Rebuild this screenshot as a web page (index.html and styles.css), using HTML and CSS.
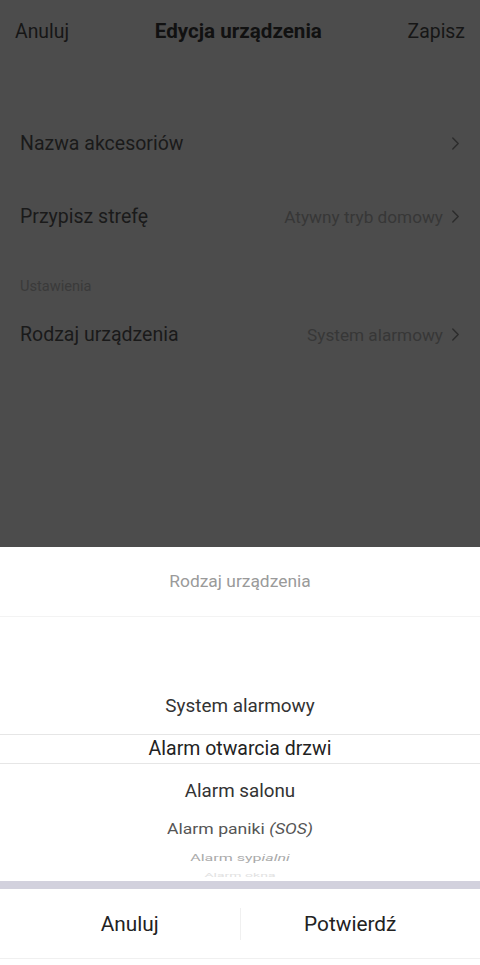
FILE: index.html
```html
<!DOCTYPE html>
<html lang="pl">
<head>
<meta charset="utf-8">
<title>Edycja urządzenia</title>
<link rel="stylesheet" href="styles.css">
</head>
<body>
<div class="screen">
  <main class="page">
    <header class="topbar">
      <span class="topbar-btn">Anuluj</span>
      <span class="topbar-title">Edycja urządzenia</span>
      <span class="topbar-btn">Zapisz</span>
    </header>
    <div class="list">
      <div class="row">
        <span class="row-label">Nazwa akcesoriów</span>
        <span class="row-value"><svg class="chev" viewBox="0 0 10 16" width="9" height="15"><path d="M2 2l6 6-6 6" fill="none" stroke="currentColor" stroke-width="1.6" stroke-linecap="round" stroke-linejoin="round"/></svg></span>
      </div>
      <div class="row">
        <span class="row-label">Przypisz strefę</span>
        <span class="row-value">Atywny tryb domowy<svg class="chev" viewBox="0 0 10 16" width="9" height="15"><path d="M2 2l6 6-6 6" fill="none" stroke="currentColor" stroke-width="1.6" stroke-linecap="round" stroke-linejoin="round"/></svg></span>
      </div>
      <div class="section-label">Ustawienia</div>
      <div class="row">
        <span class="row-label">Rodzaj urządzenia</span>
        <span class="row-value">System alarmowy<svg class="chev" viewBox="0 0 10 16" width="9" height="15"><path d="M2 2l6 6-6 6" fill="none" stroke="currentColor" stroke-width="1.6" stroke-linecap="round" stroke-linejoin="round"/></svg></span>
      </div>
    </div>
  </main>
  <section class="sheet">
    <div class="sheet-title">Rodzaj urządzenia</div>
    <div class="picker">
      <div class="opt opt-1">System alarmowy</div>
      <div class="opt opt-sel">Alarm otwarcia drzwi</div>
      <div class="opt opt-3">Alarm salonu</div>
      <div class="opt opt-4"><span>Alarm paniki <em>(SOS)</em></span></div>
      <div class="opt opt-5"><span>Alarm syp<em>ialni</em></span></div>
      <div class="opt opt-6"><span>Alarm okna</span></div>
    </div>
    <div class="sheet-sep"></div>
    <div class="actions">
      <span class="action">Anuluj</span>
      <span class="action-div"></span>
      <span class="action">Potwierdź</span>
    </div>
  </section>
</div>
</body>
</html>
```

FILE: styles.css
```css
* { box-sizing: border-box; }
html, body { margin: 0; padding: 0; }
body {
  font-family: Roboto, "Noto Sans", "Liberation Sans", sans-serif;
  background: #ffffff;
}
.screen {
  width: 480px;
  height: 965px;
  display: flex;
  flex-direction: column;
  overflow: hidden;
}
.page {
  flex: 0 0 547px;
  background: #4c4c4c;
}
.topbar {
  height: 62px;
  display: flex;
  align-items: center;
  justify-content: space-between;
  padding: 0 15px;
  color: #161616;
}
.topbar-btn { font-size: 19.4px; }
.topbar-title { font-size: 20.6px; font-weight: 700; color: #111; }
.list { padding-top: 45px; }
.row {
  height: 73px;
  display: flex;
  align-items: center;
  justify-content: space-between;
  padding: 0 20px 0 20px;
}
.row-label { font-size: 19.5px; color: #1a1a1a; }
.row-value {
  display: flex;
  align-items: center;
  gap: 8px;
  font-size: 17.2px;
  color: #373737;
}
.chev { color: #2c2c2c; }
.section-label {
  font-size: 14.6px;
  line-height: 16px;
  color: #3a3a3a;
  padding: 25px 20px 4px;
}
.sheet {
  flex: 1;
  background: #fff;
  display: flex;
  flex-direction: column;
}
.sheet-title {
  height: 70px;
  display: flex;
  align-items: center;
  justify-content: center;
  font-size: 17.4px;
  color: #9a9a9a;
  border-bottom: 1px solid #f3f3f3;
  padding-bottom: 1px;
}
.picker {
  height: 264px;
  overflow: hidden;
  padding-top: 68px;
}
.opt {
  text-align: center;
  white-space: nowrap;
  overflow: hidden;
}
.opt span { display: inline-block; }
.opt em { font-style: italic; }
.opt-1 { height: 42px; line-height: 42px; font-size: 18.9px; color: #333; }
.opt-sel {
  margin-top: 7px;
  height: 30px;
  line-height: 28px;
  font-size: 19.5px;
  color: #222;
  border-top: 1px solid #e6e6e6;
  border-bottom: 1px solid #e6e6e6;
}
.opt-3 { margin-top: 6px; height: 42px; line-height: 42px; font-size: 18.8px; color: #333; }
.opt-4 { height: 34px; line-height: 34px; font-size: 17.6px; color: #555; }
.opt-4 span { transform: scaleY(0.85); }
.opt-5 { height: 24px; line-height: 24px; font-size: 16px; color: #aaa; }
.opt-5 span { transform: scaleY(0.6); }
.opt-6 { height: 11px; line-height: 11px; font-size: 14px; color: #e2e2e2; }
.opt-6 span { transform: scaleY(0.35); }
.sheet-sep { height: 8px; background: #d2d1dd; }
.actions {
  height: 70px;
  display: flex;
  align-items: center;
  padding: 0 20px;
  border-bottom: 1px solid #f0f0f0;
}
.action {
  flex: 1;
  text-align: center;
  font-size: 20.8px;
  color: #222;
}
.action-div { width: 1px; height: 32px; background: #f0f0f0; }
```
